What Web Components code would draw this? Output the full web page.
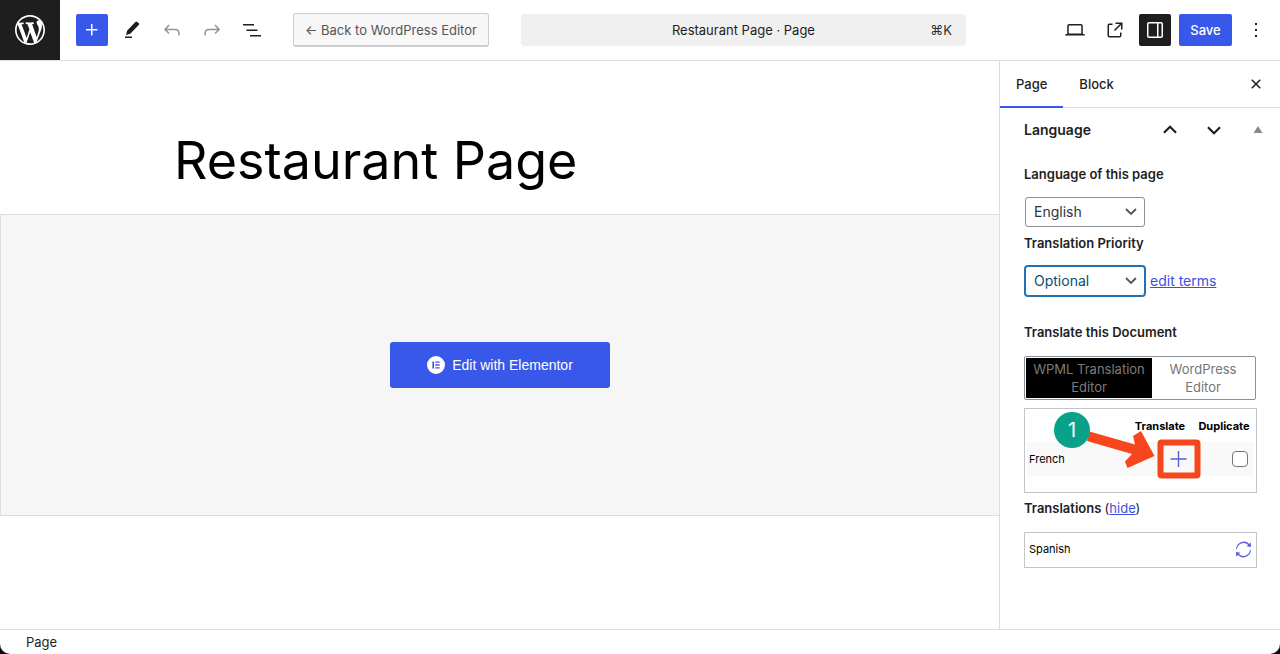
<!DOCTYPE html>
<html lang="en">
<head>
<meta charset="utf-8">
<title>Restaurant Page · Page</title>
<style>
html, body { margin: 0; }
body { background: #0b0b14; font: 13px/20px Inter, "Liberation Sans", sans-serif; color: #1e1e1e; }
</style>
</head>
<body>
<page-editor></page-editor>

<script>
const ICONS = {
  wordpress: ['-2 -2 24 24', 'M20 10c0-5.51-4.49-10-10-10C4.48 0 0 4.49 0 10c0 5.52 4.48 10 10 10 5.51 0 10-4.48 10-10zM7.78 15.37L4.37 6.22c.55-.02 1.17-.08 1.17-.08.5-.06.44-1.13-.06-1.11 0 0-1.45.11-2.37.11-.18 0-.37 0-.58-.01C4.12 2.69 6.87 1.11 10 1.11c2.33 0 4.45.87 6.05 2.34-.68-.11-1.65.39-1.65 1.58 0 .74.45 1.36.9 2.1.35.61.55 1.36.55 2.46 0 1.49-1.4 5-1.4 5l-3.03-8.37c.54-.02.82-.17.82-.17.5-.05.44-1.25-.06-1.22 0 0-1.44.12-2.38.12-.87 0-2.33-.12-2.33-.12-.5-.03-.56 1.2-.06 1.22l.92.08 1.26 3.41zM17.41 10c.24-.64.74-1.87.43-4.25.7 1.29 1.05 2.71 1.05 4.25 0 3.29-1.73 6.24-4.4 7.78.97-2.59 1.94-5.2 2.92-7.78zM6.1 18.09C3.12 16.65 1.11 13.53 1.11 10c0-1.3.23-2.48.72-3.59C3.25 10.3 4.67 14.2 6.1 18.09zm4.03-6.63l2.58 6.98c-.86.29-1.76.45-2.71.45-.79 0-1.57-.11-2.29-.33.81-2.38 1.62-4.74 2.42-7.1z'],
  plus: ['0 0 24 24', 'M11 12.5V17.5H12.5V12.5H17.5V11H12.5V6H11V11H6V12.5H11Z'],
  pencil: ['0 0 24 24', 'M18.6 5 17.3 4c-.6-.5-1.4-.4-1.9.1L7.2 12.6 6 17l4.3-1.3 8.4-8.6c.6-.6.5-1.6-.1-2.1ZM12 18.5H5V20h7v-1.5Z'],
  undo: ['0 0 24 24', 'M18.3 11.7c-.6-.6-1.4-.9-2.3-.9H6.7l2.9-3.3-1.1-1-4.5 5L8.5 16l1-1-2.7-2.7H16c.5 0 .9.2 1.3.5 1 1 1 3.4 1 4.5v.3h1.5v-.2c0-1.5 0-4.3-1.5-5.7z'],
  redo: ['0 0 24 24', 'M15.6 6.5l-1.1 1 2.9 3.3H8c-.9 0-1.7.3-2.3.9-1.4 1.5-1.4 4.2-1.4 5.6v.2h1.5v-.3c0-1.1 0-3.5 1-4.5.3-.3.7-.5 1.3-.5h9.2L14.5 15l1.1 1.1 4.6-4.6-4.6-5z'],
  list: ['0 0 24 24', 'M3 6h11v1.5H3V6Zm3.5 5.5h11V13h-11v-1.5ZM21 17H10v1.5h11V17Z'],
  desktop: ['0 0 24 24', 'M20.5 16h-.7V8c0-1.1-.9-2-2-2H6.2c-1.1 0-2 .9-2 2v8h-.7c-.8 0-1.5.7-1.5 1.5h20c0-.8-.7-1.5-1.5-1.5zM5.7 8c0-.3.2-.5.5-.5h11.6c.3 0 .5.2.5.5v7.6H5.7V8z'],
  external: ['0 0 24 24', 'M19.5 4.5h-7V6h4.44l-5.97 5.97 1.06 1.06L18 7.06v4.44h1.5v-7Zm-13 1a2 2 0 0 0-2 2v10a2 2 0 0 0 2 2h10a2 2 0 0 0 2-2v-3H17v3a.5.5 0 0 1-.5.5h-10a.5.5 0 0 1-.5-.5v-10a.5.5 0 0 1 .5-.5h3V5.5h-3Z'],
  drawer: ['0 0 24 24', 'M18 4H6c-1.1 0-2 .9-2 2v12c0 1.1.9 2 2 2h12c1.1 0 2-.9 2-2V6c0-1.1-.9-2-2-2zm-4 14.5H6c-.3 0-.5-.2-.5-.5V6c0-.3.2-.5.5-.5h8v13zm4.5-.5c0 .3-.2.5-.5.5h-2.5v-13H18c.3 0 .5.2.5.5v12z'],
  more: ['0 0 24 24', 'M13 19h-2v-2h2v2zm0-6h-2v-2h2v2zm0-6h-2V5h2v2z'],
  close: ['0 0 24 24', 'M12 13.06l3.712 3.713 1.061-1.06L13.061 12l3.712-3.712-1.06-1.06L12 10.938 8.288 7.227l-1.061 1.06L10.939 12l-3.712 3.712 1.06 1.061L12 13.061z'],
  up: ['0 0 24 24', 'M12 7.2 5.2 14l1.5 1.5L12 10.2l5.3 5.3 1.5-1.5z'],
  down: ['0 0 24 24', 'M12 16.8 5.2 10l1.5-1.5L12 13.8l5.3-5.3 1.5 1.5z'],
  triangle: ['0 0 24 24', 'M12 8l4.5 7h-9z'],
  thinplus: ['0 0 24 24', 'M11.8 4h1.4v7.3h7.3v1.4h-7.3V20h-1.4v-7.3H4.500v-1.4h7.3z'],
  elementor: ['0 0 18 18', 'M9 0a9 9 0 1 0 0 18A9 9 0 0 0 9 0ZM7 12.6H5.4V5.4H7v7.2Zm5.6 0H8.3v-1.4h4.3v1.4Zm0-2.9H8.3V8.3h4.3v1.4Zm0-2.9H8.3V5.4h4.3v1.4Z'],
  sync: ['0 0 18 18', 'M1.2 8.8H2.2A6.9 6.9 0 0 1 14 4.3L12.2 5.6 16.9 6.3 16.7 1.4 15 3.2A8 8 0 0 0 1.2 8.8ZM16.8 9.2H15.8A6.9 6.9 0 0 1 4 13.7L5.8 12.4 1.1 11.7 1.3 16.6 3 14.8A8 8 0 0 0 16.8 9.2Z']
};

function define(name, css, html) {
  customElements.define(name, class extends HTMLElement {
    constructor() {
      super();
      this.attachShadow({ mode: 'open' });
    }
    connectedCallback() {
      if (this.shadowRoot.firstChild) return;
      const t = document.createElement('template');
      t.innerHTML = `<style>*{box-sizing:border-box}${css}</style>${typeof html === 'function' ? html(this) : html}`;
      this.shadowRoot.append(t.content.cloneNode(true));
    }
  });
}

define('ui-icon', `
  :host { display: block; width: 24px; height: 24px; flex: none; }
  svg { display: block; width: 100%; height: 100%; fill: currentColor; }`,
  el => { const [box, d] = ICONS[el.getAttribute('name')];
    return `<svg viewBox="${box}" aria-hidden="true"><path fill-rule="evenodd" d="${d}"/></svg>`; });

define('tool-button', `
  :host { display: block; flex: none; color: #1e1e1e; }
  button { display: flex; align-items: center; justify-content: center; width: 32px; height: 32px; padding: 0;
    border: 0; border-radius: 2px; background: none; color: inherit; }
  :host([tone=primary]) button { background: #3858e9; color: #fff; }
  :host([tone=pressed]) button { background: #1e1e1e; color: #fff; }
  :host([tone=muted]) button { color: #949494; }`,
  el => `<button type="button" aria-label="${el.getAttribute('label')}"><ui-icon name="${el.getAttribute('icon')}"></ui-icon></button>`);

define('editor-header', `
  :host { display: flex; align-items: center; height: 61px; border-bottom: 1px solid #ddd; padding-right: 8px; background: #fff; }
  .logo { display: flex; align-items: center; justify-content: center; width: 60px; height: 60px; background: #1e1e1e; color: #fff; align-self: flex-start; flex: none; }
  .logo ui-icon { width: 36px; height: 36px; }
  .tools, .actions { display: flex; gap: 8px; }
  .tools { padding-left: 16px; }
  .actions { margin-left: auto; padding-left: 16px; }
  button { font: inherit; cursor: pointer; white-space: nowrap; }
  .back { margin-left: 25px; height: 34px; padding: 0 11px; border: 1px solid #ccc; border-bottom-width: 2px; border-radius: 3px; background: #f7f7f7; color: #555; }
  .search { flex: 1; max-width: 445px; height: 32px; margin-left: 32px; padding: 0 14px; border: 0; border-radius: 4px; background: #f0f0f0; color: #1e1e1e;
    display: grid; grid-template-columns: 1fr auto 1fr; align-items: center; }
  .search span:first-child { grid-column: 2; }
  .search span:last-child { justify-self: end; color: #2f2f2f; }
  .save { width: 53px; height: 32px; padding: 0; border: 0; border-radius: 2px; background: #3858e9; color: #fff; font-weight: 500; }`,
  `<a class="logo" href="#" aria-label="View pages"><ui-icon name="wordpress"></ui-icon></a>
  <div class="tools">
    <tool-button icon="plus" label="Add block" tone="primary"></tool-button>
    <tool-button icon="pencil" label="Tools"></tool-button>
    <tool-button icon="undo" label="Undo" tone="muted"></tool-button>
    <tool-button icon="redo" label="Redo" tone="muted"></tool-button>
    <tool-button icon="list" label="Document overview"></tool-button>
  </div>
  <button class="back" type="button">← Back to WordPress Editor</button>
  <button class="search" type="button"><span>Restaurant Page · Page</span><span>⌘K</span></button>
  <div class="actions">
    <tool-button icon="desktop" label="Preview"></tool-button>
    <tool-button icon="external" label="View page"></tool-button>
    <tool-button icon="drawer" label="Settings" tone="pressed"></tool-button>
    <button class="save" type="button">Save</button>
    <tool-button icon="more" label="Options"></tool-button>
  </div>`);

define('page-canvas', `
  :host { display: block; flex: 1; min-width: 0; background: #fff; }
  h1 { margin: 0; padding: 66px 24px 20px 174px; font-size: 52px; line-height: 67px; font-weight: 400; color: #000; }
  .panel { display: flex; align-items: center; justify-content: center; height: 302px; border: 1px solid #ddd; border-right: 0; background: #f6f6f6; }
  button { display: flex; align-items: center; gap: 7px; height: 46px; padding: 0 37px; border: 0; border-radius: 3px; background: #3858e9; color: #fff;
    font: 500 14px/20px "Liberation Sans", sans-serif; }
  ui-icon { width: 18px; height: 18px; }`,
  `<h1>Restaurant Page</h1>
  <div class="panel"><button type="button"><ui-icon name="elementor"></ui-icon>Edit with Elementor</button></div>`);

define('select-field', `
  :host { display: block; }
  label { display: block; font-weight: 600; }
  .line { display: flex; align-items: center; gap: 5px; margin-top: 13px; }
  .box { display: grid; align-items: center; width: 120px; margin-left: 1px; }
  select { grid-area: 1 / 1; width: 100%; height: 30px; padding: 0 24px 0 8px; border: 1px solid #8c8f94; border-radius: 3px; background: #fff;
    appearance: none; font: inherit; font-size: 14px; color: #2c3338; }
  svg { grid-area: 1 / 1; justify-self: end; margin-right: 8px; width: 12px; height: 8px; fill: none; stroke: #555; stroke-width: 1.8; pointer-events: none; }
  :host([active]) select { border-color: #2271b1; box-shadow: 0 0 0 1px #2271b1; color: #0a4b78; }`,
  el => `<label for="s">${el.getAttribute('label')}</label>
  <div class="line"><span class="box"><select id="s"><option>${el.getAttribute('value')}</option></select>
  <svg viewBox="0 0 12 8"><path d="M1 1l5 5 5-5"/></svg></span><slot></slot></div>`);

define('editor-choice', `
  :host { display: flex; width: 232px; height: 44px; padding: 1px; border: 1px solid #8c8f94; border-radius: 2px; }
  button { flex: 1; padding: 0 4px; border: 0; background: #fff; color: #757575; font: inherit; line-height: 18px; }
  button:last-child { padding: 0 12px; }
  button.on { flex: 0 0 126px; background: #000; color: #7c7c7c; }`,
  `<button class="on" type="button" aria-pressed="true">WPML Translation Editor</button>
  <button type="button" aria-pressed="false">WordPress Editor</button>`);

define('step-pointer', `
  :host { display: block; position: absolute; left: 29px; top: 3px; width: 148px; height: 68px; pointer-events: none; }
  svg { display: block; width: 100%; height: 100%; }
  span { position: absolute; left: 0; top: 0; width: 36px; height: 36px; border-radius: 50%; background: #08a28b; color: #fff;
    font-size: 20px; line-height: 36px; text-align: center; }`,
  `<svg viewBox="0 0 148 68"><path d="M35.500 19.500 81 32.500 79 24 87 19 100.500 44 73.500 56 71 49.500 78 42 33 29Z" fill="#f7461d"/>
  <rect x="106.500" y="30.500" width="37" height="33" rx="1" fill="none" stroke="#f7461d" stroke-width="6"/></svg><span>1</span>`);

define('translation-table', `
  :host { display: block; position: relative; height: 85px; padding: 0 2px; border: 1px solid #c3c4c7; }
  table { width: 100%; border-collapse: collapse; font-size: 11px; color: #000; }
  th, td { padding: 0; height: 34px; text-align: center; vertical-align: middle; }
  thead th, thead td { font-weight: 700; height: 33px; }
  thead th:nth-child(2) { width: 68px; }
  thead th:nth-child(3) { width: 60px; }
  tbody { background: #f9f9f9; }
  tbody th { padding-left: 2px; text-align: left; font-weight: 400; }
  .add { display: flex; width: 24px; margin-left: 40px; color: #5a5fd6; }
  input { appearance: none; display: block; margin: 0 0 0 38px; width: 16px; height: 16px; border: 1px solid #757575; border-radius: 4px; background: #fff; }`,
  `<table><thead><tr><td></td><th scope="col">Translate</th><th scope="col">Duplicate</th></tr></thead>
  <tbody><tr><th scope="row">French</th><td><a class="add" href="#" aria-label="Translate to French"><ui-icon name="thinplus"></ui-icon></a></td>
  <td><input type="checkbox" aria-label="Duplicate French"></td></tr></tbody></table>
  <step-pointer></step-pointer>`);

define('settings-sidebar', `
  :host { display: block; flex: none; width: 281px; border-left: 1px solid #ddd; background: #fff; }
  .tabs { display: flex; align-items: center; height: 47px; padding-right: 8px; border-bottom: 1px solid #ddd; }
  .tabs > button { height: 47px; padding: 0 16px; border: 0; background: none; font: inherit; font-weight: 500; color: #1e1e1e; }
  .tabs > button[aria-selected=true] { border-bottom: 2px solid #3858e9; border-top: 2px solid transparent; }
  .tabs tool-button { margin-left: auto; }
  .head { display: flex; align-items: center; height: 44px; padding: 0 6px 0 24px; }
  h2 { margin: 0 auto 0 0; font-size: 14px; font-weight: 600; }
  .head tool-button + tool-button { margin-left: 12px; }
  .head tool-button:last-child { color: #8a8a8a; }
  .body { padding: 12px 23px 24px 24px; }
  select-field + select-field { margin-top: 6px; }
  h3 { margin: 0; font-size: 13px; font-weight: 600; }
  h3 span { font-weight: 400; }
  a { color: #3c50dc; }
  .terms { font-size: 14px; }
  .doc { margin: 26px 0 14px; }
  translation-table { margin: 8px 0 5px; }
  .done { display: flex; align-items: center; justify-content: space-between; height: 36px; margin-top: 14px; padding: 0 4px 2px; border: 1px solid #c3c4c7; font-size: 11px; color: #000; }
  .done a { display: flex; color: #5a5fd6; }
  .done ui-icon { width: 17px; height: 17px; }`,
  `<div class="tabs" role="tablist"><button role="tab" aria-selected="true">Page</button><button role="tab" aria-selected="false">Block</button>
    <tool-button icon="close" label="Close settings"></tool-button></div>
  <div class="head"><h2>Language</h2><tool-button icon="up" label="Move up"></tool-button>
    <tool-button icon="down" label="Move down"></tool-button><tool-button icon="triangle" label="Toggle panel"></tool-button></div>
  <div class="body">
    <select-field label="Language of this page" value="English"></select-field>
    <select-field label="Translation Priority" value="Optional" active><a class="terms" href="#">edit terms</a></select-field>
    <h3 class="doc">Translate this Document</h3>
    <editor-choice></editor-choice>
    <translation-table></translation-table>
    <h3>Translations <span>(<a href="#">hide</a>)</span></h3>
    <div class="done"><span>Spanish</span><a href="#" aria-label="Update Spanish translation"><ui-icon name="sync"></ui-icon></a></div>
  </div>`);

define('page-editor', `
  :host { display: flex; flex-direction: column; min-height: 100vh; border-radius: 0 0 10px 10px; overflow: hidden; background: #fff; }
  main { flex: 1; display: flex; }
  footer { height: 25px; padding: 2px 26px; border-top: 1px solid #ddd; }`,
  `<editor-header></editor-header>
  <main><page-canvas></page-canvas><settings-sidebar></settings-sidebar></main>
  <footer>Page</footer>`);
</script>
</body>
</html>
